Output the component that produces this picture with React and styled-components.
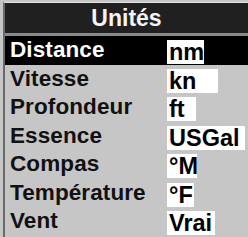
import React from 'react';
import styled, { createGlobalStyle } from 'styled-components';

const GlobalStyle = createGlobalStyle`
  html, body {
    margin: 0;
    padding: 0;
    background: #c6c6c6;
  }
`;

const Screen = styled.div`
  width: 248px;
  height: 237px;
  overflow: hidden;
  padding: 2px 0 0 3px;
  box-sizing: border-box;
  font-family: "Liberation Sans", Arial, sans-serif;
  font-weight: bold;
`;

const Panel = styled.div`
  border-left: 2px solid #6a6a6a;
  border-top: 1px solid #e6e6e6;
  height: 100%;
  box-sizing: border-box;
`;

const Title = styled.div`
  height: 30px;
  background: #202020;
  color: #f4f4f4;
  font-size: 23px;
  line-height: 30px;
  text-align: center;
  border-bottom: 3px solid #8a8a8a;
`;

const Row = styled.div`
  display: flex;
  align-items: flex-start;
  height: 28.5px;
  box-sizing: border-box;
  padding-left: 5px;
  background: ${(p) => (p.$selected ? '#000' : 'transparent')};
  color: ${(p) => (p.$selected ? '#fff' : '#111')};
`;

const Label = styled.div`
  width: 157px;
  font-size: 22.5px;
  line-height: 28px;
  letter-spacing: 0.1px;
`;

const Value = styled.div`
  width: ${(p) => p.$w}px;
  height: 24px;
  margin-top: 4px;
  box-sizing: border-box;
  padding-left: 2px;
  background: #fff;
  color: #000;
  font-size: 23.5px;
  line-height: 25px;
  white-space: nowrap;
  overflow: hidden;
`;

const rows = [
  { label: 'Distance', value: 'nm', w: 37 },
  { label: 'Vitesse', value: 'kn', w: 51 },
  { label: 'Profondeur', value: 'ft', w: 29 },
  { label: 'Essence', value: 'USGal', w: 78 },
  { label: 'Compas', value: '°M', w: 30 },
  { label: 'Température', value: '°F', w: 27 },
  { label: 'Vent', value: 'Vrai', w: 48 },
];

export default function App() {
  return (
    <Screen>
      <GlobalStyle />
      <Panel>
        <Title>Unités</Title>
        {rows.map((r, i) => (
          <Row key={r.label} $selected={i === 0}>
            <Label>{r.label}</Label>
            <Value $w={r.w}>{r.value}</Value>
          </Row>
        ))}
      </Panel>
    </Screen>
  );
}
